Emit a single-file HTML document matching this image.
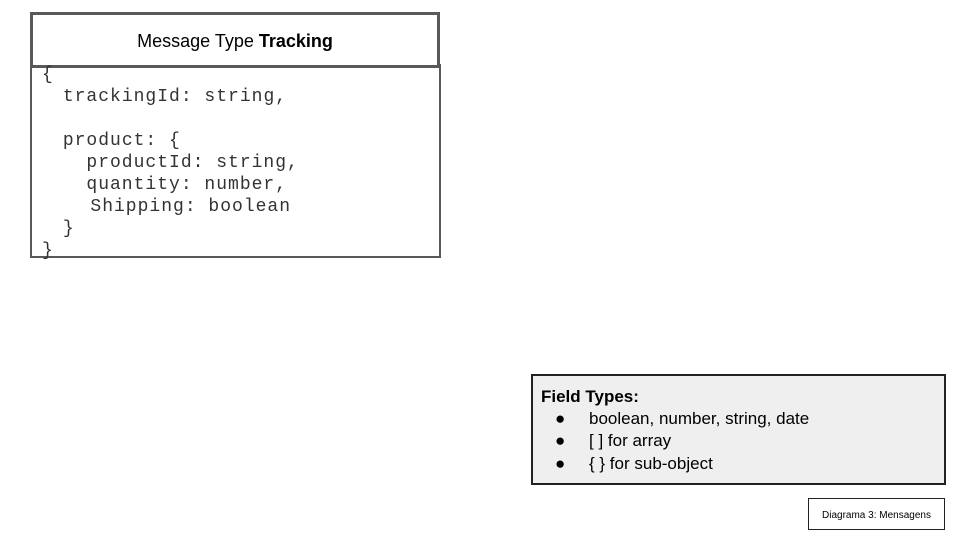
<!DOCTYPE html>
<html><head><style>
body{margin:0;width:960px;height:540px;background:#fff;position:relative;overflow:hidden;font-family:"Liberation Sans",sans-serif}
.hdr{position:absolute;left:30px;top:12px;width:404px;height:50px;border:3px solid #595959;text-align:center;line-height:52px;font-size:18px;color:#000;background:#fff}
.body{position:absolute;left:30px;top:64px;width:407px;height:192px;border:2px solid #595959;border-top:none}
.code{position:absolute;left:42px;top:64px;font-family:"Liberation Mono",monospace;font-size:18px;letter-spacing:1px;line-height:22px;color:#333;white-space:pre;margin:0}
.ft{position:absolute;left:531px;top:374px;width:411px;height:107px;border:2px solid #222;background:#efefef;font-size:17px;line-height:22px;color:#000}
.lbl{position:absolute;left:808px;top:498px;width:135px;height:30px;border:1px solid #222;font-size:10px;line-height:33px;text-align:center;color:#000}
</style></head><body>
<div class="body"></div>
<div class="hdr">Message Type <b>Tracking</b></div>
<pre class="code">{
 <span style="margin-left:9px">trackingId: string,</span>

 <span style="margin-left:9px">product: {</span>
   <span style="margin-left:9px">productId: string,</span>
   <span style="margin-left:9px">quantity: number,</span>
   <span style="margin-left:13px">Shipping: boolean</span>
 <span style="margin-left:9px">}</span>
}</pre>
<div class="ft">
<div style="position:absolute;left:8px;top:10px;font-weight:bold">Field Types:</div>
<div style="position:absolute;left:22px;top:32px">●</div><div style="position:absolute;left:56px;top:32px">boolean, number, string, date</div>
<div style="position:absolute;left:22px;top:54px">●</div><div style="position:absolute;left:56px;top:54px">[ ] for array</div>
<div style="position:absolute;left:22px;top:77px">●</div><div style="position:absolute;left:56px;top:77px">{ } for sub-object</div>
</div>
<div class="lbl">Diagrama 3: Mensagens</div>
</body></html>
